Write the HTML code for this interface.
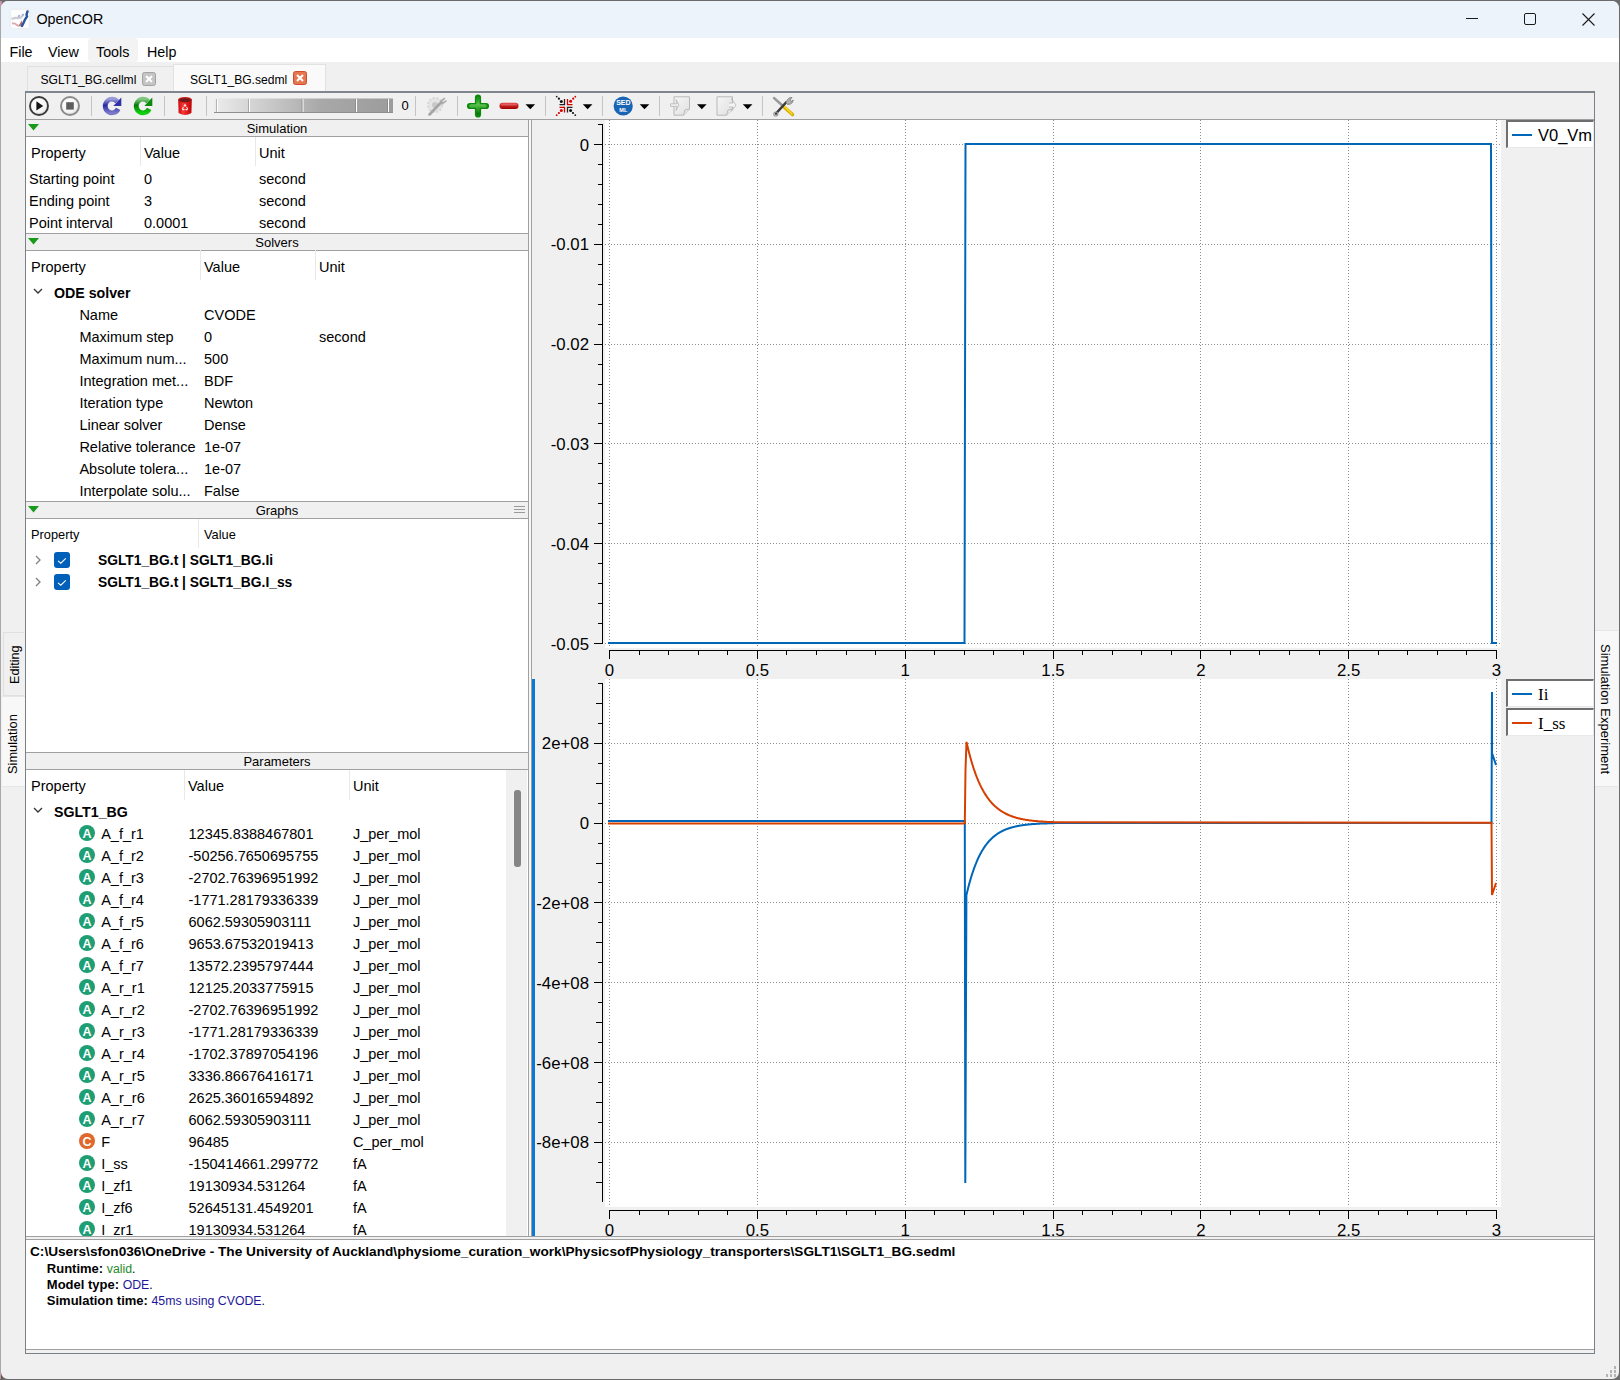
<!DOCTYPE html><html><head><meta charset="utf-8"><title>OpenCOR</title><style>
*{margin:0;padding:0;box-sizing:border-box}
html,body{width:1620px;height:1380px;overflow:hidden;background:#6b6b6b;font-family:"Liberation Sans",sans-serif;color:#000}
.abs{position:absolute}
.t{position:absolute;white-space:nowrap;line-height:1}
svg{position:absolute;overflow:visible}
</style></head><body>
<div class="abs" style="left:0;top:1px;width:2px;height:1378px;background:linear-gradient(#e878a8,#b07080 25%,#a89090 40%,#3a8a4a 45%,#a0a0a0 55%,#a07070 80%,#804040)"></div>
<div class="abs" style="left:1px;top:1px;width:1618px;height:1378px;background:#f0f0f0;border-radius:7px;"></div>
<div class="abs" style="left:1px;top:1px;width:1618px;height:37px;background:#ecf3fa;border-radius:7px 7px 0 0;"></div>
<div class="abs" style="left:1px;top:38px;width:1618px;height:24px;background:#ffffff;"></div>
<svg style="left:10px;top:9px" width="20" height="20" viewBox="0 0 20 20">
<rect x="0.3" y="0.3" width="19.4" height="19.4" rx="2.5" fill="#fdfdfd" stroke="#e4e8ec" stroke-width="0.8"/>
<path d="M1.5 10 Q5 8.5 8 9 T13 6" stroke="#c4c8d0" stroke-width="2.2" fill="none" opacity="0.9"/>
<path d="M8 7.5 L10 6.5 M12 6 L14 5.5" stroke="#9aaccc" stroke-width="1.6" fill="none"/>
<path d="M2 14.5 Q5 14 7 16 T11 15" stroke="#d8a8aa" stroke-width="1.8" fill="none"/>
<path d="M9.5 17 L11.5 13.5 L12.5 16.5" stroke="#b06a70" stroke-width="1.6" fill="none"/>
<path d="M17.5 2.5 L16.5 5.5 L17 7.5 L15 10.5 L13.5 14 L12 17" stroke="#2a55a0" stroke-width="2.4" fill="none" stroke-linecap="round"/>
</svg>
<div class="t" style="top:12.30px;font-size:14.3px;font-family:'Liberation Sans',sans-serif;color:#000;left:36.5px;">OpenCOR</div>
<div class="abs" style="left:1466px;top:18px;width:12px;height:1px;background:#1a1a1a;"></div>
<div class="abs" style="left:1524px;top:13px;width:12px;height:12px;border:1px solid #1a1a1a;border-radius:2px"></div>
<svg style="left:1582px;top:13px" width="13" height="13" viewBox="0 0 13 13"><path d="M0.5 0.5 L12.5 12.5 M12.5 0.5 L0.5 12.5" stroke="#1a1a1a" stroke-width="1.1"/></svg>
<div class="abs" style="left:88px;top:38px;width:50px;height:24px;background:#f3f3f3;border-radius:4px;"></div>
<div class="t" style="top:44.90px;font-size:14.3px;font-family:'Liberation Sans',sans-serif;color:#000;left:9.5px;">File</div>
<div class="t" style="top:44.90px;font-size:14.3px;font-family:'Liberation Sans',sans-serif;color:#000;left:48px;">View</div>
<div class="t" style="top:44.90px;font-size:14.3px;font-family:'Liberation Sans',sans-serif;color:#000;left:96px;">Tools</div>
<div class="t" style="top:44.90px;font-size:14.3px;font-family:'Liberation Sans',sans-serif;color:#000;left:147px;">Help</div>
<div class="abs" style="left:27px;top:66px;width:147px;height:26px;background:#f0f0f0;border:1px solid #e0e0e0;border-bottom:none"></div>
<div class="t" style="top:73.76px;font-size:12.1px;font-family:'Liberation Sans',sans-serif;color:#000;left:40.5px;">SGLT1_BG.cellml</div>
<svg style="left:142px;top:72px" width="14" height="14" viewBox="0 0 14 14"><rect x="0.5" y="0.5" width="13" height="13" rx="2" fill="#c4c4c4" stroke="#a2a2a2"/><path d="M4 4 L10 10 M10 4 L4 10" stroke="#fff" stroke-width="2"/></svg>
<div class="abs" style="left:173px;top:64px;width:153px;height:28px;background:#fafafa;border:1px solid #e2e2e2;border-bottom:none"></div>
<div class="t" style="top:73.76px;font-size:12.1px;font-family:'Liberation Sans',sans-serif;color:#000;left:190px;">SGLT1_BG.sedml</div>
<svg style="left:293px;top:71px" width="14" height="14" viewBox="0 0 14 14"><rect x="0.5" y="0.5" width="13" height="13" rx="2" fill="#e67650" stroke="#cf4d2c"/><path d="M4 4 L10 10 M10 4 L4 10" stroke="#fff" stroke-width="2"/></svg>
<div class="abs" style="left:25px;top:91px;width:1570px;height:2px;background:#7f868d;"></div>
<div class="abs" style="left:25px;top:91px;width:1px;height:1263px;background:#7a8088;"></div>
<div class="abs" style="left:1594px;top:91px;width:1px;height:1263px;background:#7a8088;"></div>
<div class="abs" style="left:25px;top:1353px;width:1570px;height:1px;background:#7a8088;"></div>
<div class="abs" style="left:26px;top:119px;width:1568px;height:1px;background:#a0a0a0;"></div>
<svg style="left:0;top:0" width="1620" height="1380" viewBox="0 0 1620 1380"><defs>
<radialGradient id="gw" cx="0.4" cy="0.35" r="0.7"><stop offset="0" stop-color="#ffffff"/><stop offset="0.7" stop-color="#f4f4f4"/><stop offset="1" stop-color="#cfcfcf"/></radialGradient>
<linearGradient id="gblue" x1="0" y1="0" x2="0" y2="1"><stop offset="0" stop-color="#9a9ad8"/><stop offset="0.45" stop-color="#2a2aa8"/><stop offset="1" stop-color="#7a7ac8"/></linearGradient>
<linearGradient id="ggreen" x1="0" y1="0" x2="0" y2="1"><stop offset="0" stop-color="#80c880"/><stop offset="0.45" stop-color="#067a06"/><stop offset="1" stop-color="#10d010"/></linearGradient>
<linearGradient id="gred" x1="0" y1="0" x2="1" y2="0"><stop offset="0" stop-color="#c80a0a"/><stop offset="0.35" stop-color="#f83838"/><stop offset="1" stop-color="#c00000"/></linearGradient>
<linearGradient id="gprog" x1="0" y1="0" x2="1" y2="0"><stop offset="0" stop-color="#ececec"/><stop offset="0.6" stop-color="#a8a8a8"/><stop offset="1" stop-color="#9c9c9c"/></linearGradient>
<linearGradient id="gplus" x1="0" y1="0" x2="0" y2="1"><stop offset="0" stop-color="#1a9a1a"/><stop offset="0.4" stop-color="#6acb5a"/><stop offset="1" stop-color="#0a7a0a"/></linearGradient>
<linearGradient id="gminus" x1="0" y1="0" x2="0" y2="1"><stop offset="0" stop-color="#e04040"/><stop offset="1" stop-color="#a00000"/></linearGradient>
<linearGradient id="gdoc" x1="0" y1="0" x2="1" y2="1"><stop offset="0" stop-color="#f6f6f6"/><stop offset="1" stop-color="#e0e0e0"/></linearGradient>
</defs><circle cx="39" cy="106" r="9" fill="url(#gw)" stroke="#3a3a3a" stroke-width="1.9"/><path d="M36.4 101.3 L43.3 105.9 L36.4 110.5 Z" fill="#151515"/><circle cx="70" cy="106" r="9" fill="url(#gw)" stroke="#8a8a8a" stroke-width="1.9"/><rect x="66.2" y="102.2" width="7.6" height="7.4" fill="#5e5e5e"/><line x1="91.5" y1="96" x2="91.5" y2="116" stroke="#c4c4c4" stroke-width="1"/><line x1="164.5" y1="96" x2="164.5" y2="116" stroke="#c4c4c4" stroke-width="1"/><line x1="206.5" y1="96" x2="206.5" y2="116" stroke="#c4c4c4" stroke-width="1"/><line x1="415.5" y1="96" x2="415.5" y2="116" stroke="#c4c4c4" stroke-width="1"/><line x1="457.5" y1="96" x2="457.5" y2="116" stroke="#c4c4c4" stroke-width="1"/><line x1="545.5" y1="96" x2="545.5" y2="116" stroke="#c4c4c4" stroke-width="1"/><line x1="602.5" y1="96" x2="602.5" y2="116" stroke="#c4c4c4" stroke-width="1"/><line x1="659.5" y1="96" x2="659.5" y2="116" stroke="#c4c4c4" stroke-width="1"/><line x1="762.5" y1="96" x2="762.5" y2="116" stroke="#c4c4c4" stroke-width="1"/><path d="M118.16 108.87 A6.8 6.8 0 1 1 117.21 101.63" fill="none" stroke="url(#gblue)" stroke-width="4.8"/><path d="M121.30 97.6 L121.30 106 L113.30 106 Z" fill="#3030a8"/><path d="M149.16 108.87 A6.8 6.8 0 1 1 148.21 101.63" fill="none" stroke="url(#ggreen)" stroke-width="4.8"/><path d="M152.30 97.6 L152.30 106 L144.30 106 Z" fill="#0a8a0a"/><path d="M178.2 99.5 L178.6 113 Q185 117 191.4 113 L191.8 99.5 Z" fill="url(#gred)"/><ellipse cx="185" cy="99.8" rx="6.9" ry="2.9" fill="#c41818"/><ellipse cx="185" cy="100.2" rx="5.6" ry="1.9" fill="#6e1a1a"/><path d="M185 104.6 L188 109.6 L182 109.6 Z" fill="none" stroke="#fff" stroke-width="1.1" stroke-dasharray="2.2 0.9" opacity="0.9"/><rect x="214" y="98.5" width="179" height="14.5" fill="url(#gprog)"/><line x1="214" y1="112.5" x2="393" y2="112.5" stroke="#8e8e8e" stroke-width="1"/><line x1="217.5" y1="99" x2="217.5" y2="112" stroke="#ffffff" stroke-width="1"/><line x1="216.5" y1="99" x2="216.5" y2="112" stroke="#7a7a7a" stroke-width="0.8" opacity="0.6"/><line x1="249.5" y1="99" x2="249.5" y2="112" stroke="#ffffff" stroke-width="1"/><line x1="248.5" y1="99" x2="248.5" y2="112" stroke="#7a7a7a" stroke-width="0.8" opacity="0.6"/><line x1="303" y1="99" x2="303" y2="112" stroke="#ffffff" stroke-width="1"/><line x1="302" y1="99" x2="302" y2="112" stroke="#7a7a7a" stroke-width="0.8" opacity="0.6"/><line x1="356.5" y1="99" x2="356.5" y2="112" stroke="#ffffff" stroke-width="1"/><line x1="355.5" y1="99" x2="355.5" y2="112" stroke="#7a7a7a" stroke-width="0.8" opacity="0.6"/><line x1="388.5" y1="99" x2="388.5" y2="112" stroke="#ffffff" stroke-width="1"/><line x1="387.5" y1="99" x2="387.5" y2="112" stroke="#7a7a7a" stroke-width="0.8" opacity="0.6"/><g opacity="0.75"><circle cx="435" cy="105" r="7" fill="#e2e2e2" stroke="#cfcfcf" stroke-width="2.2" stroke-dasharray="2.2 1.6"/><circle cx="435" cy="105" r="3" fill="#bdbdbd"/><path d="M429.5 114.5 L441.5 102" stroke="#8c8c8c" stroke-width="2.6" stroke-linecap="round"/><path d="M441 101 L444.5 98.5 M442.5 103.5 L446 101" stroke="#9a9a9a" stroke-width="1.6" stroke-linecap="round"/></g><path d="M478 97.5 L478 114.5 M470 106 L486 106" stroke="#0d8a0d" stroke-width="6.2" stroke-linecap="round"/><path d="M478 98.5 L478 113.5 M471 106 L485 106" stroke="url(#gplus)" stroke-width="3.6" stroke-linecap="round" opacity="0.85"/><rect x="499.5" y="102.8" width="19" height="6.2" rx="3" fill="url(#gminus)"/><rect x="501" y="103.6" width="16" height="2" rx="1" fill="#f07a7a" opacity="0.6"/><path d="M525.5 104.3 L535.1 104.3 L530.3 109.3 Z" fill="#000"/><path d="M582.8 104.3 L592.4 104.3 L587.5999999999999 109.3 Z" fill="#000"/><path d="M639.7 104.3 L649.3000000000001 104.3 L644.5 109.3 Z" fill="#000"/><path d="M697 104.3 L706.6 104.3 L701.8 109.3 Z" fill="#000"/><path d="M742.8 104.3 L752.4 104.3 L747.5999999999999 109.3 Z" fill="#000"/><g stroke-width="1.3" fill="none"><path d="M564.5 99 L564.5 104.6 L559.5 104.6" stroke="#222"/><path d="M567.5 99 L567.5 104.6 L572.5 104.6" stroke="#d40000"/><path d="M559.5 107.4 L564.5 107.4 L564.5 112.6" stroke="#d40000"/><path d="M572.5 107.4 L567.5 107.4 L567.5 112.6" stroke="#222"/></g><circle cx="556.7" cy="96.6" r="0.9" fill="#222"/><circle cx="558.9" cy="98.7" r="1.1" fill="#111"/><circle cx="561.3" cy="101.4" r="1.5" fill="#111"/><circle cx="575.3" cy="96.7" r="0.9" fill="#d40000"/><circle cx="573.2" cy="98.7" r="1.1" fill="#d40000"/><circle cx="570.6" cy="101.3" r="1.5" fill="#d40000"/><circle cx="556.7" cy="115.2" r="0.9" fill="#d40000"/><circle cx="558.9" cy="113" r="1.1" fill="#d40000"/><circle cx="561.3" cy="110.4" r="1.5" fill="#d40000"/><circle cx="575.3" cy="115.2" r="0.9" fill="#222"/><circle cx="573" cy="113" r="1.1" fill="#111"/><circle cx="570.6" cy="110.4" r="1.5" fill="#111"/><circle cx="623.2" cy="106" r="9.6" fill="#1a64b4"/><text x="623.4" y="105.3" font-family="Liberation Sans" font-weight="bold" font-size="7" fill="#fff" text-anchor="middle">SED</text><text x="623.3" y="111.6" font-family="Liberation Sans" font-weight="bold" font-size="5.6" fill="#fff" text-anchor="middle">ML</text><path d="M674.0 96.8 L689.5 96.8 L689.5 109 L683.5 115.2 L674.0 115.2 Z" fill="url(#gdoc)" stroke="#b8b8b8" stroke-width="1"/><path d="M689.5 109 L685.0 110 L683.5 115.2" fill="#e8e8e8" stroke="#b0b0b0" stroke-width="0.8"/><path d="M670.5 103.8 L677 103.8 L676 99.5 L679 105 L676 110.5 L677 106.4 L670.5 106.4 Z" fill="#f2f2f2" stroke="#b4b4b4" stroke-width="0.8"/><path d="M717.0 96.8 L732.5 96.8 L732.5 109 L726.5 115.2 L717.0 115.2 Z" fill="url(#gdoc)" stroke="#b8b8b8" stroke-width="1"/><path d="M732.5 109 L728.0 110 L726.5 115.2" fill="#e8e8e8" stroke="#b0b0b0" stroke-width="0.8"/><path d="M729 103 L733 103 L731.5 98.8 L736 105 L731.5 111.2 L733 107 L729 107" fill="#f4f4f4" stroke="#b4b4b4" stroke-width="0.8"/><path d="M774 98 L783.5 106.5" stroke="#9a9a9a" stroke-width="2.4" stroke-linecap="round"/><path d="M783.5 106.5 L792.5 114.5" stroke="#d8a800" stroke-width="3.4" stroke-linecap="round"/><path d="M784 106 L792 114" stroke="#f5dc20" stroke-width="1.6" stroke-linecap="round"/><path d="M776 113.5 L786 102.5" stroke="#3a3a3a" stroke-width="2.6" stroke-linecap="round"/><circle cx="775.8" cy="114" r="2" fill="none" stroke="#9a9a9a" stroke-width="1.2"/><path d="M786 102.5 L787.5 99.5 Q789.5 97 792 97.5 L790 100 L791 101.5 L793.2 100 Q793 103 790.5 104 L787.5 104.5 Z" fill="#b0b0b0" stroke="#7a7a7a" stroke-width="0.8"/></svg>
<div class="t" style="top:99.30px;font-size:13px;font-family:'Liberation Sans',sans-serif;color:#000;left:401.6px;">0</div>
<div class="abs" style="left:26px;top:120px;width:502px;height:1116px;background:#ffffff;"></div>
<div class="abs" style="left:528px;top:120px;width:1px;height:1116px;background:#a0a0a0;"></div>
<div class="abs" style="left:529px;top:120px;width:2px;height:1116px;background:#f8f8f8;"></div>
<div class="abs" style="left:531px;top:120px;width:1px;height:1116px;background:#a0a0a0;"></div>
<div class="abs" style="left:26px;top:120px;width:502px;height:16px;background:#f0f0f0;"></div>
<div class="abs" style="left:26px;top:136px;width:502px;height:1px;background:#a0a0a0;"></div>
<svg style="left:28px;top:124px" width="11" height="7" viewBox="0 0 11 7"><path d="M0 0 L11 0 L5.5 6.5 Z" fill="#1a9a1a"/></svg>
<div class="t" style="top:121.50px;font-size:13px;font-family:'Liberation Sans',sans-serif;color:#000;left:277px;transform:translateX(-50%);">Simulation</div>
<div class="abs" style="left:140px;top:137px;width:1px;height:29px;background:#e8e8e8;"></div>
<div class="abs" style="left:255px;top:137px;width:1px;height:29px;background:#e8e8e8;"></div>
<div class="t" style="top:145.73px;font-size:14.5px;font-family:'Liberation Sans',sans-serif;color:#000;left:31px;">Property</div>
<div class="t" style="top:145.73px;font-size:14.5px;font-family:'Liberation Sans',sans-serif;color:#000;left:144px;">Value</div>
<div class="t" style="top:145.73px;font-size:14.5px;font-family:'Liberation Sans',sans-serif;color:#000;left:259px;">Unit</div>
<div class="t" style="top:171.73px;font-size:14.5px;font-family:'Liberation Sans',sans-serif;color:#000;left:29px;">Starting point</div>
<div class="t" style="top:171.73px;font-size:14.5px;font-family:'Liberation Sans',sans-serif;color:#000;left:144px;">0</div>
<div class="t" style="top:171.73px;font-size:14.5px;font-family:'Liberation Sans',sans-serif;color:#000;left:259px;">second</div>
<div class="t" style="top:193.73px;font-size:14.5px;font-family:'Liberation Sans',sans-serif;color:#000;left:29px;">Ending point</div>
<div class="t" style="top:193.73px;font-size:14.5px;font-family:'Liberation Sans',sans-serif;color:#000;left:144px;">3</div>
<div class="t" style="top:193.73px;font-size:14.5px;font-family:'Liberation Sans',sans-serif;color:#000;left:259px;">second</div>
<div class="t" style="top:215.73px;font-size:14.5px;font-family:'Liberation Sans',sans-serif;color:#000;left:29px;">Point interval</div>
<div class="t" style="top:215.73px;font-size:14.5px;font-family:'Liberation Sans',sans-serif;color:#000;left:144px;">0.0001</div>
<div class="t" style="top:215.73px;font-size:14.5px;font-family:'Liberation Sans',sans-serif;color:#000;left:259px;">second</div>
<div class="abs" style="left:26px;top:233px;width:502px;height:1px;background:#a0a0a0;"></div>
<div class="abs" style="left:26px;top:234px;width:502px;height:16px;background:#f0f0f0;"></div>
<div class="abs" style="left:26px;top:250px;width:502px;height:1px;background:#a0a0a0;"></div>
<svg style="left:28px;top:238px" width="11" height="7" viewBox="0 0 11 7"><path d="M0 0 L11 0 L5.5 6.5 Z" fill="#1a9a1a"/></svg>
<div class="t" style="top:235.50px;font-size:13px;font-family:'Liberation Sans',sans-serif;color:#000;left:277px;transform:translateX(-50%);">Solvers</div>
<div class="abs" style="left:200px;top:250px;width:1px;height:30px;background:#e8e8e8;"></div>
<div class="abs" style="left:315px;top:250px;width:1px;height:30px;background:#e8e8e8;"></div>
<div class="t" style="top:259.73px;font-size:14.5px;font-family:'Liberation Sans',sans-serif;color:#000;left:31px;">Property</div>
<div class="t" style="top:259.73px;font-size:14.5px;font-family:'Liberation Sans',sans-serif;color:#000;left:204px;">Value</div>
<div class="t" style="top:259.73px;font-size:14.5px;font-family:'Liberation Sans',sans-serif;color:#000;left:319px;">Unit</div>
<svg style="left:33px;top:288px" width="10" height="7" viewBox="0 0 10 7"><path d="M1 1 L5 5 L9 1" stroke="#333" stroke-width="1.3" fill="none"/></svg>
<div class="t" style="top:285.98px;font-size:14.2px;font-family:'Liberation Sans',sans-serif;color:#000;font-weight:bold;left:54px;">ODE solver</div>
<div class="t" style="top:307.73px;font-size:14.5px;font-family:'Liberation Sans',sans-serif;color:#000;left:79.4px;">Name</div>
<div class="t" style="top:307.73px;font-size:14.5px;font-family:'Liberation Sans',sans-serif;color:#000;left:204px;">CVODE</div>
<div class="t" style="top:329.73px;font-size:14.5px;font-family:'Liberation Sans',sans-serif;color:#000;left:79.4px;">Maximum step</div>
<div class="t" style="top:329.73px;font-size:14.5px;font-family:'Liberation Sans',sans-serif;color:#000;left:204px;">0</div>
<div class="t" style="top:329.73px;font-size:14.5px;font-family:'Liberation Sans',sans-serif;color:#000;left:319px;">second</div>
<div class="t" style="top:351.73px;font-size:14.5px;font-family:'Liberation Sans',sans-serif;color:#000;left:79.4px;">Maximum num...</div>
<div class="t" style="top:351.73px;font-size:14.5px;font-family:'Liberation Sans',sans-serif;color:#000;left:204px;">500</div>
<div class="t" style="top:373.73px;font-size:14.5px;font-family:'Liberation Sans',sans-serif;color:#000;left:79.4px;">Integration met...</div>
<div class="t" style="top:373.73px;font-size:14.5px;font-family:'Liberation Sans',sans-serif;color:#000;left:204px;">BDF</div>
<div class="t" style="top:395.73px;font-size:14.5px;font-family:'Liberation Sans',sans-serif;color:#000;left:79.4px;">Iteration type</div>
<div class="t" style="top:395.73px;font-size:14.5px;font-family:'Liberation Sans',sans-serif;color:#000;left:204px;">Newton</div>
<div class="t" style="top:417.73px;font-size:14.5px;font-family:'Liberation Sans',sans-serif;color:#000;left:79.4px;">Linear solver</div>
<div class="t" style="top:417.73px;font-size:14.5px;font-family:'Liberation Sans',sans-serif;color:#000;left:204px;">Dense</div>
<div class="t" style="top:439.73px;font-size:14.5px;font-family:'Liberation Sans',sans-serif;color:#000;left:79.4px;">Relative tolerance</div>
<div class="t" style="top:439.73px;font-size:14.5px;font-family:'Liberation Sans',sans-serif;color:#000;left:204px;">1e-07</div>
<div class="t" style="top:461.73px;font-size:14.5px;font-family:'Liberation Sans',sans-serif;color:#000;left:79.4px;">Absolute tolera...</div>
<div class="t" style="top:461.73px;font-size:14.5px;font-family:'Liberation Sans',sans-serif;color:#000;left:204px;">1e-07</div>
<div class="t" style="top:483.73px;font-size:14.5px;font-family:'Liberation Sans',sans-serif;color:#000;left:79.4px;">Interpolate solu...</div>
<div class="t" style="top:483.73px;font-size:14.5px;font-family:'Liberation Sans',sans-serif;color:#000;left:204px;">False</div>
<div class="abs" style="left:26px;top:501px;width:502px;height:1px;background:#a0a0a0;"></div>
<div class="abs" style="left:26px;top:502px;width:502px;height:16px;background:#f0f0f0;"></div>
<div class="abs" style="left:26px;top:518px;width:502px;height:1px;background:#a0a0a0;"></div>
<svg style="left:28px;top:506px" width="11" height="7" viewBox="0 0 11 7"><path d="M0 0 L11 0 L5.5 6.5 Z" fill="#1a9a1a"/></svg>
<div class="t" style="top:503.50px;font-size:13px;font-family:'Liberation Sans',sans-serif;color:#000;left:277px;transform:translateX(-50%);">Graphs</div>
<div class="abs" style="left:514px;top:506px;width:11px;height:1px;background:#9a9a9a;"></div>
<div class="abs" style="left:514px;top:509px;width:11px;height:1px;background:#9a9a9a;"></div>
<div class="abs" style="left:514px;top:512px;width:11px;height:1px;background:#9a9a9a;"></div>
<div class="abs" style="left:198px;top:519px;width:1px;height:29px;background:#e8e8e8;"></div>
<div class="t" style="top:529.16px;font-size:12.8px;font-family:'Liberation Sans',sans-serif;color:#000;left:31px;">Property</div>
<div class="t" style="top:529.16px;font-size:12.8px;font-family:'Liberation Sans',sans-serif;color:#000;left:204px;">Value</div>
<svg style="left:35px;top:554.7px" width="7" height="10" viewBox="0 0 7 10"><path d="M1 1 L5 5 L1 9" stroke="#808080" stroke-width="1.3" fill="none"/></svg>
<svg style="left:54px;top:551.7px" width="16" height="16" viewBox="0 0 16 16"><rect x="0" y="0" width="16" height="16" rx="3" fill="#005fb8"/><path d="M4 8.8 L6.8 11.2 L11.8 6.4" stroke="#fff" stroke-width="1.1" fill="none"/></svg>
<div class="t" style="top:554.32px;font-size:13.8px;font-family:'Liberation Sans',sans-serif;color:#000;font-weight:bold;left:98px;">SGLT1_BG.t | SGLT1_BG.Ii</div>
<svg style="left:35px;top:576.7px" width="7" height="10" viewBox="0 0 7 10"><path d="M1 1 L5 5 L1 9" stroke="#808080" stroke-width="1.3" fill="none"/></svg>
<svg style="left:54px;top:573.7px" width="16" height="16" viewBox="0 0 16 16"><rect x="0" y="0" width="16" height="16" rx="3" fill="#005fb8"/><path d="M4 8.8 L6.8 11.2 L11.8 6.4" stroke="#fff" stroke-width="1.1" fill="none"/></svg>
<div class="t" style="top:576.32px;font-size:13.8px;font-family:'Liberation Sans',sans-serif;color:#000;font-weight:bold;left:98px;">SGLT1_BG.t | SGLT1_BG.I_ss</div>
<div class="abs" style="left:26px;top:752px;width:502px;height:1px;background:#a0a0a0;"></div>
<div class="abs" style="left:26px;top:753px;width:502px;height:16px;background:#f0f0f0;"></div>
<div class="abs" style="left:26px;top:769px;width:502px;height:1px;background:#a0a0a0;"></div>
<div class="t" style="top:754.50px;font-size:13px;font-family:'Liberation Sans',sans-serif;color:#000;left:277px;transform:translateX(-50%);">Parameters</div>
<div class="abs" style="left:184px;top:770px;width:1px;height:30px;background:#e8e8e8;"></div>
<div class="abs" style="left:349px;top:770px;width:1px;height:30px;background:#e8e8e8;"></div>
<div class="t" style="top:778.73px;font-size:14.5px;font-family:'Liberation Sans',sans-serif;color:#000;left:31px;">Property</div>
<div class="t" style="top:778.73px;font-size:14.5px;font-family:'Liberation Sans',sans-serif;color:#000;left:188px;">Value</div>
<div class="t" style="top:778.73px;font-size:14.5px;font-family:'Liberation Sans',sans-serif;color:#000;left:353px;">Unit</div>
<div class="abs" style="left:506px;top:770px;width:21px;height:466px;background:#f0f0f0;"></div>
<div class="abs" style="left:514px;top:790px;width:7px;height:77px;background:#858585;border-radius:3px;"></div>
<svg style="left:33px;top:807px" width="10" height="7" viewBox="0 0 10 7"><path d="M1 1 L5 5 L9 1" stroke="#333" stroke-width="1.3" fill="none"/></svg>
<div class="t" style="top:804.98px;font-size:14.2px;font-family:'Liberation Sans',sans-serif;color:#000;font-weight:bold;left:54px;">SGLT1_BG</div>
<div class="abs" style="left:26px;top:800px;width:480px;height:436px;overflow:hidden">
<svg style="left:52.7px;top:25px" width="16" height="16" viewBox="0 0 16 16"><circle cx="8" cy="8" r="8" fill="#1e9e72"/><text x="8" y="12.6" font-size="12.5" font-weight="bold" text-anchor="middle" fill="#fff" font-family="Liberation Sans">A</text></svg>
<div class="t" style="top:26.73px;font-size:14.5px;font-family:'Liberation Sans',sans-serif;color:#000;left:75.2px;">A_f_r1</div>
<div class="t" style="top:26.73px;font-size:14.5px;font-family:'Liberation Sans',sans-serif;color:#000;left:162.5px;">12345.8388467801</div>
<div class="t" style="top:26.73px;font-size:14.5px;font-family:'Liberation Sans',sans-serif;color:#000;left:326.9px;">J_per_mol</div>
<svg style="left:52.7px;top:47px" width="16" height="16" viewBox="0 0 16 16"><circle cx="8" cy="8" r="8" fill="#1e9e72"/><text x="8" y="12.6" font-size="12.5" font-weight="bold" text-anchor="middle" fill="#fff" font-family="Liberation Sans">A</text></svg>
<div class="t" style="top:48.73px;font-size:14.5px;font-family:'Liberation Sans',sans-serif;color:#000;left:75.2px;">A_f_r2</div>
<div class="t" style="top:48.73px;font-size:14.5px;font-family:'Liberation Sans',sans-serif;color:#000;left:162.5px;">-50256.7650695755</div>
<div class="t" style="top:48.73px;font-size:14.5px;font-family:'Liberation Sans',sans-serif;color:#000;left:326.9px;">J_per_mol</div>
<svg style="left:52.7px;top:69px" width="16" height="16" viewBox="0 0 16 16"><circle cx="8" cy="8" r="8" fill="#1e9e72"/><text x="8" y="12.6" font-size="12.5" font-weight="bold" text-anchor="middle" fill="#fff" font-family="Liberation Sans">A</text></svg>
<div class="t" style="top:70.73px;font-size:14.5px;font-family:'Liberation Sans',sans-serif;color:#000;left:75.2px;">A_f_r3</div>
<div class="t" style="top:70.73px;font-size:14.5px;font-family:'Liberation Sans',sans-serif;color:#000;left:162.5px;">-2702.76396951992</div>
<div class="t" style="top:70.73px;font-size:14.5px;font-family:'Liberation Sans',sans-serif;color:#000;left:326.9px;">J_per_mol</div>
<svg style="left:52.7px;top:91px" width="16" height="16" viewBox="0 0 16 16"><circle cx="8" cy="8" r="8" fill="#1e9e72"/><text x="8" y="12.6" font-size="12.5" font-weight="bold" text-anchor="middle" fill="#fff" font-family="Liberation Sans">A</text></svg>
<div class="t" style="top:92.73px;font-size:14.5px;font-family:'Liberation Sans',sans-serif;color:#000;left:75.2px;">A_f_r4</div>
<div class="t" style="top:92.73px;font-size:14.5px;font-family:'Liberation Sans',sans-serif;color:#000;left:162.5px;">-1771.28179336339</div>
<div class="t" style="top:92.73px;font-size:14.5px;font-family:'Liberation Sans',sans-serif;color:#000;left:326.9px;">J_per_mol</div>
<svg style="left:52.7px;top:113px" width="16" height="16" viewBox="0 0 16 16"><circle cx="8" cy="8" r="8" fill="#1e9e72"/><text x="8" y="12.6" font-size="12.5" font-weight="bold" text-anchor="middle" fill="#fff" font-family="Liberation Sans">A</text></svg>
<div class="t" style="top:114.73px;font-size:14.5px;font-family:'Liberation Sans',sans-serif;color:#000;left:75.2px;">A_f_r5</div>
<div class="t" style="top:114.73px;font-size:14.5px;font-family:'Liberation Sans',sans-serif;color:#000;left:162.5px;">6062.59305903111</div>
<div class="t" style="top:114.73px;font-size:14.5px;font-family:'Liberation Sans',sans-serif;color:#000;left:326.9px;">J_per_mol</div>
<svg style="left:52.7px;top:135px" width="16" height="16" viewBox="0 0 16 16"><circle cx="8" cy="8" r="8" fill="#1e9e72"/><text x="8" y="12.6" font-size="12.5" font-weight="bold" text-anchor="middle" fill="#fff" font-family="Liberation Sans">A</text></svg>
<div class="t" style="top:136.73px;font-size:14.5px;font-family:'Liberation Sans',sans-serif;color:#000;left:75.2px;">A_f_r6</div>
<div class="t" style="top:136.73px;font-size:14.5px;font-family:'Liberation Sans',sans-serif;color:#000;left:162.5px;">9653.67532019413</div>
<div class="t" style="top:136.73px;font-size:14.5px;font-family:'Liberation Sans',sans-serif;color:#000;left:326.9px;">J_per_mol</div>
<svg style="left:52.7px;top:157px" width="16" height="16" viewBox="0 0 16 16"><circle cx="8" cy="8" r="8" fill="#1e9e72"/><text x="8" y="12.6" font-size="12.5" font-weight="bold" text-anchor="middle" fill="#fff" font-family="Liberation Sans">A</text></svg>
<div class="t" style="top:158.73px;font-size:14.5px;font-family:'Liberation Sans',sans-serif;color:#000;left:75.2px;">A_f_r7</div>
<div class="t" style="top:158.73px;font-size:14.5px;font-family:'Liberation Sans',sans-serif;color:#000;left:162.5px;">13572.2395797444</div>
<div class="t" style="top:158.73px;font-size:14.5px;font-family:'Liberation Sans',sans-serif;color:#000;left:326.9px;">J_per_mol</div>
<svg style="left:52.7px;top:179px" width="16" height="16" viewBox="0 0 16 16"><circle cx="8" cy="8" r="8" fill="#1e9e72"/><text x="8" y="12.6" font-size="12.5" font-weight="bold" text-anchor="middle" fill="#fff" font-family="Liberation Sans">A</text></svg>
<div class="t" style="top:180.73px;font-size:14.5px;font-family:'Liberation Sans',sans-serif;color:#000;left:75.2px;">A_r_r1</div>
<div class="t" style="top:180.73px;font-size:14.5px;font-family:'Liberation Sans',sans-serif;color:#000;left:162.5px;">12125.2033775915</div>
<div class="t" style="top:180.73px;font-size:14.5px;font-family:'Liberation Sans',sans-serif;color:#000;left:326.9px;">J_per_mol</div>
<svg style="left:52.7px;top:201px" width="16" height="16" viewBox="0 0 16 16"><circle cx="8" cy="8" r="8" fill="#1e9e72"/><text x="8" y="12.6" font-size="12.5" font-weight="bold" text-anchor="middle" fill="#fff" font-family="Liberation Sans">A</text></svg>
<div class="t" style="top:202.73px;font-size:14.5px;font-family:'Liberation Sans',sans-serif;color:#000;left:75.2px;">A_r_r2</div>
<div class="t" style="top:202.73px;font-size:14.5px;font-family:'Liberation Sans',sans-serif;color:#000;left:162.5px;">-2702.76396951992</div>
<div class="t" style="top:202.73px;font-size:14.5px;font-family:'Liberation Sans',sans-serif;color:#000;left:326.9px;">J_per_mol</div>
<svg style="left:52.7px;top:223px" width="16" height="16" viewBox="0 0 16 16"><circle cx="8" cy="8" r="8" fill="#1e9e72"/><text x="8" y="12.6" font-size="12.5" font-weight="bold" text-anchor="middle" fill="#fff" font-family="Liberation Sans">A</text></svg>
<div class="t" style="top:224.73px;font-size:14.5px;font-family:'Liberation Sans',sans-serif;color:#000;left:75.2px;">A_r_r3</div>
<div class="t" style="top:224.73px;font-size:14.5px;font-family:'Liberation Sans',sans-serif;color:#000;left:162.5px;">-1771.28179336339</div>
<div class="t" style="top:224.73px;font-size:14.5px;font-family:'Liberation Sans',sans-serif;color:#000;left:326.9px;">J_per_mol</div>
<svg style="left:52.7px;top:245px" width="16" height="16" viewBox="0 0 16 16"><circle cx="8" cy="8" r="8" fill="#1e9e72"/><text x="8" y="12.6" font-size="12.5" font-weight="bold" text-anchor="middle" fill="#fff" font-family="Liberation Sans">A</text></svg>
<div class="t" style="top:246.73px;font-size:14.5px;font-family:'Liberation Sans',sans-serif;color:#000;left:75.2px;">A_r_r4</div>
<div class="t" style="top:246.73px;font-size:14.5px;font-family:'Liberation Sans',sans-serif;color:#000;left:162.5px;">-1702.37897054196</div>
<div class="t" style="top:246.73px;font-size:14.5px;font-family:'Liberation Sans',sans-serif;color:#000;left:326.9px;">J_per_mol</div>
<svg style="left:52.7px;top:267px" width="16" height="16" viewBox="0 0 16 16"><circle cx="8" cy="8" r="8" fill="#1e9e72"/><text x="8" y="12.6" font-size="12.5" font-weight="bold" text-anchor="middle" fill="#fff" font-family="Liberation Sans">A</text></svg>
<div class="t" style="top:268.73px;font-size:14.5px;font-family:'Liberation Sans',sans-serif;color:#000;left:75.2px;">A_r_r5</div>
<div class="t" style="top:268.73px;font-size:14.5px;font-family:'Liberation Sans',sans-serif;color:#000;left:162.5px;">3336.86676416171</div>
<div class="t" style="top:268.73px;font-size:14.5px;font-family:'Liberation Sans',sans-serif;color:#000;left:326.9px;">J_per_mol</div>
<svg style="left:52.7px;top:289px" width="16" height="16" viewBox="0 0 16 16"><circle cx="8" cy="8" r="8" fill="#1e9e72"/><text x="8" y="12.6" font-size="12.5" font-weight="bold" text-anchor="middle" fill="#fff" font-family="Liberation Sans">A</text></svg>
<div class="t" style="top:290.73px;font-size:14.5px;font-family:'Liberation Sans',sans-serif;color:#000;left:75.2px;">A_r_r6</div>
<div class="t" style="top:290.73px;font-size:14.5px;font-family:'Liberation Sans',sans-serif;color:#000;left:162.5px;">2625.36016594892</div>
<div class="t" style="top:290.73px;font-size:14.5px;font-family:'Liberation Sans',sans-serif;color:#000;left:326.9px;">J_per_mol</div>
<svg style="left:52.7px;top:311px" width="16" height="16" viewBox="0 0 16 16"><circle cx="8" cy="8" r="8" fill="#1e9e72"/><text x="8" y="12.6" font-size="12.5" font-weight="bold" text-anchor="middle" fill="#fff" font-family="Liberation Sans">A</text></svg>
<div class="t" style="top:312.73px;font-size:14.5px;font-family:'Liberation Sans',sans-serif;color:#000;left:75.2px;">A_r_r7</div>
<div class="t" style="top:312.73px;font-size:14.5px;font-family:'Liberation Sans',sans-serif;color:#000;left:162.5px;">6062.59305903111</div>
<div class="t" style="top:312.73px;font-size:14.5px;font-family:'Liberation Sans',sans-serif;color:#000;left:326.9px;">J_per_mol</div>
<svg style="left:52.7px;top:333px" width="16" height="16" viewBox="0 0 16 16"><circle cx="8" cy="8" r="8" fill="#e0662a"/><text x="8" y="12.6" font-size="12.5" font-weight="bold" text-anchor="middle" fill="#fff" font-family="Liberation Sans">C</text></svg>
<div class="t" style="top:334.73px;font-size:14.5px;font-family:'Liberation Sans',sans-serif;color:#000;left:75.2px;">F</div>
<div class="t" style="top:334.73px;font-size:14.5px;font-family:'Liberation Sans',sans-serif;color:#000;left:162.5px;">96485</div>
<div class="t" style="top:334.73px;font-size:14.5px;font-family:'Liberation Sans',sans-serif;color:#000;left:326.9px;">C_per_mol</div>
<svg style="left:52.7px;top:355px" width="16" height="16" viewBox="0 0 16 16"><circle cx="8" cy="8" r="8" fill="#1e9e72"/><text x="8" y="12.6" font-size="12.5" font-weight="bold" text-anchor="middle" fill="#fff" font-family="Liberation Sans">A</text></svg>
<div class="t" style="top:356.73px;font-size:14.5px;font-family:'Liberation Sans',sans-serif;color:#000;left:75.2px;">I_ss</div>
<div class="t" style="top:356.73px;font-size:14.5px;font-family:'Liberation Sans',sans-serif;color:#000;left:162.5px;">-150414661.299772</div>
<div class="t" style="top:356.73px;font-size:14.5px;font-family:'Liberation Sans',sans-serif;color:#000;left:326.9px;">fA</div>
<svg style="left:52.7px;top:377px" width="16" height="16" viewBox="0 0 16 16"><circle cx="8" cy="8" r="8" fill="#1e9e72"/><text x="8" y="12.6" font-size="12.5" font-weight="bold" text-anchor="middle" fill="#fff" font-family="Liberation Sans">A</text></svg>
<div class="t" style="top:378.73px;font-size:14.5px;font-family:'Liberation Sans',sans-serif;color:#000;left:75.2px;">I_zf1</div>
<div class="t" style="top:378.73px;font-size:14.5px;font-family:'Liberation Sans',sans-serif;color:#000;left:162.5px;">19130934.531264</div>
<div class="t" style="top:378.73px;font-size:14.5px;font-family:'Liberation Sans',sans-serif;color:#000;left:326.9px;">fA</div>
<svg style="left:52.7px;top:399px" width="16" height="16" viewBox="0 0 16 16"><circle cx="8" cy="8" r="8" fill="#1e9e72"/><text x="8" y="12.6" font-size="12.5" font-weight="bold" text-anchor="middle" fill="#fff" font-family="Liberation Sans">A</text></svg>
<div class="t" style="top:400.73px;font-size:14.5px;font-family:'Liberation Sans',sans-serif;color:#000;left:75.2px;">I_zf6</div>
<div class="t" style="top:400.73px;font-size:14.5px;font-family:'Liberation Sans',sans-serif;color:#000;left:162.5px;">52645131.4549201</div>
<div class="t" style="top:400.73px;font-size:14.5px;font-family:'Liberation Sans',sans-serif;color:#000;left:326.9px;">fA</div>
<svg style="left:52.7px;top:421px" width="16" height="16" viewBox="0 0 16 16"><circle cx="8" cy="8" r="8" fill="#1e9e72"/><text x="8" y="12.6" font-size="12.5" font-weight="bold" text-anchor="middle" fill="#fff" font-family="Liberation Sans">A</text></svg>
<div class="t" style="top:422.73px;font-size:14.5px;font-family:'Liberation Sans',sans-serif;color:#000;left:75.2px;">I_zr1</div>
<div class="t" style="top:422.73px;font-size:14.5px;font-family:'Liberation Sans',sans-serif;color:#000;left:162.5px;">19130934.531264</div>
<div class="t" style="top:422.73px;font-size:14.5px;font-family:'Liberation Sans',sans-serif;color:#000;left:326.9px;">fA</div>
</div>
<div class="abs" style="left:532px;top:120px;width:1062px;height:1116px;background:#f0f0f0;"></div>
<div class="abs" style="left:532px;top:679px;width:3px;height:557px;background:#0a78d4;"></div>
<div class="abs" style="left:26px;top:1236px;width:1568px;height:1px;background:#a0a0a0;"></div>
<div class="abs" style="left:26px;top:1239px;width:1568px;height:1px;background:#a0a0a0;"></div>
<div class="abs" style="left:26px;top:1240px;width:1568px;height:109px;background:#ffffff;"></div>
<div class="abs" style="left:26px;top:1349px;width:1568px;height:1px;background:#a0a0a0;"></div>
<div class="abs" style="left:605px;top:120px;width:896px;height:528px;background:#ffffff;"></div>
<div class="t" style="top:662.78px;font-size:16.8px;font-family:'Liberation Sans',sans-serif;color:#000;left:609.5px;transform:translateX(-50%);">0</div>
<div class="t" style="top:662.78px;font-size:16.8px;font-family:'Liberation Sans',sans-serif;color:#000;left:757.335px;transform:translateX(-50%);">0.5</div>
<div class="t" style="top:662.78px;font-size:16.8px;font-family:'Liberation Sans',sans-serif;color:#000;left:905.1700000000001px;transform:translateX(-50%);">1</div>
<div class="t" style="top:662.78px;font-size:16.8px;font-family:'Liberation Sans',sans-serif;color:#000;left:1053.005px;transform:translateX(-50%);">1.5</div>
<div class="t" style="top:662.78px;font-size:16.8px;font-family:'Liberation Sans',sans-serif;color:#000;left:1200.8400000000001px;transform:translateX(-50%);">2</div>
<div class="t" style="top:662.78px;font-size:16.8px;font-family:'Liberation Sans',sans-serif;color:#000;left:1348.6750000000002px;transform:translateX(-50%);">2.5</div>
<div class="t" style="top:662.78px;font-size:16.8px;font-family:'Liberation Sans',sans-serif;color:#000;left:1496.51px;transform:translateX(-50%);">3</div>
<div class="t" style="top:137.58px;font-size:16.8px;font-family:'Liberation Sans',sans-serif;color:#000;right:1031px;">0</div>
<div class="t" style="top:237.38px;font-size:16.8px;font-family:'Liberation Sans',sans-serif;color:#000;right:1031px;">-0.01</div>
<div class="t" style="top:337.18px;font-size:16.8px;font-family:'Liberation Sans',sans-serif;color:#000;right:1031px;">-0.02</div>
<div class="t" style="top:436.98px;font-size:16.8px;font-family:'Liberation Sans',sans-serif;color:#000;right:1031px;">-0.03</div>
<div class="t" style="top:536.78px;font-size:16.8px;font-family:'Liberation Sans',sans-serif;color:#000;right:1031px;">-0.04</div>
<div class="t" style="top:636.58px;font-size:16.8px;font-family:'Liberation Sans',sans-serif;color:#000;right:1031px;">-0.05</div>
<div class="abs" style="left:605px;top:679px;width:896px;height:528px;background:#ffffff;"></div>
<div class="t" style="top:1222.78px;font-size:16.8px;font-family:'Liberation Sans',sans-serif;color:#000;left:609.5px;transform:translateX(-50%);">0</div>
<div class="t" style="top:1222.78px;font-size:16.8px;font-family:'Liberation Sans',sans-serif;color:#000;left:757.335px;transform:translateX(-50%);">0.5</div>
<div class="t" style="top:1222.78px;font-size:16.8px;font-family:'Liberation Sans',sans-serif;color:#000;left:905.1700000000001px;transform:translateX(-50%);">1</div>
<div class="t" style="top:1222.78px;font-size:16.8px;font-family:'Liberation Sans',sans-serif;color:#000;left:1053.005px;transform:translateX(-50%);">1.5</div>
<div class="t" style="top:1222.78px;font-size:16.8px;font-family:'Liberation Sans',sans-serif;color:#000;left:1200.8400000000001px;transform:translateX(-50%);">2</div>
<div class="t" style="top:1222.78px;font-size:16.8px;font-family:'Liberation Sans',sans-serif;color:#000;left:1348.6750000000002px;transform:translateX(-50%);">2.5</div>
<div class="t" style="top:1222.78px;font-size:16.8px;font-family:'Liberation Sans',sans-serif;color:#000;left:1496.51px;transform:translateX(-50%);">3</div>
<div class="t" style="top:736.38px;font-size:16.8px;font-family:'Liberation Sans',sans-serif;color:#000;right:1031px;">2e+08</div>
<div class="t" style="top:816.18px;font-size:16.8px;font-family:'Liberation Sans',sans-serif;color:#000;right:1031px;">0</div>
<div class="t" style="top:895.98px;font-size:16.8px;font-family:'Liberation Sans',sans-serif;color:#000;right:1031px;">-2e+08</div>
<div class="t" style="top:975.78px;font-size:16.8px;font-family:'Liberation Sans',sans-serif;color:#000;right:1031px;">-4e+08</div>
<div class="t" style="top:1055.58px;font-size:16.8px;font-family:'Liberation Sans',sans-serif;color:#000;right:1031px;">-6e+08</div>
<div class="t" style="top:1135.38px;font-size:16.8px;font-family:'Liberation Sans',sans-serif;color:#000;right:1031px;">-8e+08</div>
<svg style="left:0;top:0" width="1620" height="1380" viewBox="0 0 1620 1380"><line x1="609.5" y1="120" x2="609.5" y2="648" stroke="#8c8c8c" stroke-width="1" stroke-dasharray="1 2"/><line x1="757.5" y1="120" x2="757.5" y2="648" stroke="#8c8c8c" stroke-width="1" stroke-dasharray="1 2"/><line x1="905.5" y1="120" x2="905.5" y2="648" stroke="#8c8c8c" stroke-width="1" stroke-dasharray="1 2"/><line x1="1053.5" y1="120" x2="1053.5" y2="648" stroke="#8c8c8c" stroke-width="1" stroke-dasharray="1 2"/><line x1="1200.5" y1="120" x2="1200.5" y2="648" stroke="#8c8c8c" stroke-width="1" stroke-dasharray="1 2"/><line x1="1348.5" y1="120" x2="1348.5" y2="648" stroke="#8c8c8c" stroke-width="1" stroke-dasharray="1 2"/><line x1="1496.5" y1="120" x2="1496.5" y2="648" stroke="#8c8c8c" stroke-width="1" stroke-dasharray="1 2"/><line x1="605" y1="144.5" x2="1501" y2="144.5" stroke="#8c8c8c" stroke-width="1" stroke-dasharray="1 2"/><line x1="605" y1="244.5" x2="1501" y2="244.5" stroke="#8c8c8c" stroke-width="1" stroke-dasharray="1 2"/><line x1="605" y1="344.5" x2="1501" y2="344.5" stroke="#8c8c8c" stroke-width="1" stroke-dasharray="1 2"/><line x1="605" y1="443.5" x2="1501" y2="443.5" stroke="#8c8c8c" stroke-width="1" stroke-dasharray="1 2"/><line x1="605" y1="543.5" x2="1501" y2="543.5" stroke="#8c8c8c" stroke-width="1" stroke-dasharray="1 2"/><line x1="605" y1="643.5" x2="1501" y2="643.5" stroke="#8c8c8c" stroke-width="1" stroke-dasharray="1 2"/><line x1="602.5" y1="124" x2="602.5" y2="644" stroke="#000" stroke-width="1"/><line x1="594" y1="144.5" x2="603" y2="144.5" stroke="#000" stroke-width="1"/><line x1="594" y1="244.5" x2="603" y2="244.5" stroke="#000" stroke-width="1"/><line x1="594" y1="344.5" x2="603" y2="344.5" stroke="#000" stroke-width="1"/><line x1="594" y1="443.5" x2="603" y2="443.5" stroke="#000" stroke-width="1"/><line x1="594" y1="543.5" x2="603" y2="543.5" stroke="#000" stroke-width="1"/><line x1="594" y1="643.5" x2="603" y2="643.5" stroke="#000" stroke-width="1"/><line x1="598" y1="124.5" x2="603" y2="124.5" stroke="#000" stroke-width="1"/><line x1="598" y1="164.5" x2="603" y2="164.5" stroke="#000" stroke-width="1"/><line x1="598" y1="184.5" x2="603" y2="184.5" stroke="#000" stroke-width="1"/><line x1="598" y1="204.5" x2="603" y2="204.5" stroke="#000" stroke-width="1"/><line x1="598" y1="224.5" x2="603" y2="224.5" stroke="#000" stroke-width="1"/><line x1="598" y1="264.5" x2="603" y2="264.5" stroke="#000" stroke-width="1"/><line x1="598" y1="284.5" x2="603" y2="284.5" stroke="#000" stroke-width="1"/><line x1="598" y1="304.5" x2="603" y2="304.5" stroke="#000" stroke-width="1"/><line x1="598" y1="324.5" x2="603" y2="324.5" stroke="#000" stroke-width="1"/><line x1="598" y1="364.5" x2="603" y2="364.5" stroke="#000" stroke-width="1"/><line x1="598" y1="384.5" x2="603" y2="384.5" stroke="#000" stroke-width="1"/><line x1="598" y1="403.5" x2="603" y2="403.5" stroke="#000" stroke-width="1"/><line x1="598" y1="423.5" x2="603" y2="423.5" stroke="#000" stroke-width="1"/><line x1="598" y1="463.5" x2="603" y2="463.5" stroke="#000" stroke-width="1"/><line x1="598" y1="483.5" x2="603" y2="483.5" stroke="#000" stroke-width="1"/><line x1="598" y1="503.5" x2="603" y2="503.5" stroke="#000" stroke-width="1"/><line x1="598" y1="523.5" x2="603" y2="523.5" stroke="#000" stroke-width="1"/><line x1="598" y1="563.5" x2="603" y2="563.5" stroke="#000" stroke-width="1"/><line x1="598" y1="583.5" x2="603" y2="583.5" stroke="#000" stroke-width="1"/><line x1="598" y1="603.5" x2="603" y2="603.5" stroke="#000" stroke-width="1"/><line x1="598" y1="623.5" x2="603" y2="623.5" stroke="#000" stroke-width="1"/><line x1="609" y1="650.5" x2="1497" y2="650.5" stroke="#000" stroke-width="1"/><line x1="609.5" y1="650" x2="609.5" y2="659" stroke="#000" stroke-width="1"/><line x1="639.5" y1="650" x2="639.5" y2="655" stroke="#000" stroke-width="1"/><line x1="668.5" y1="650" x2="668.5" y2="655" stroke="#000" stroke-width="1"/><line x1="698.5" y1="650" x2="698.5" y2="655" stroke="#000" stroke-width="1"/><line x1="727.5" y1="650" x2="727.5" y2="655" stroke="#000" stroke-width="1"/><line x1="757.5" y1="650" x2="757.5" y2="659" stroke="#000" stroke-width="1"/><line x1="786.5" y1="650" x2="786.5" y2="655" stroke="#000" stroke-width="1"/><line x1="816.5" y1="650" x2="816.5" y2="655" stroke="#000" stroke-width="1"/><line x1="846.5" y1="650" x2="846.5" y2="655" stroke="#000" stroke-width="1"/><line x1="875.5" y1="650" x2="875.5" y2="655" stroke="#000" stroke-width="1"/><line x1="905.5" y1="650" x2="905.5" y2="659" stroke="#000" stroke-width="1"/><line x1="934.5" y1="650" x2="934.5" y2="655" stroke="#000" stroke-width="1"/><line x1="964.5" y1="650" x2="964.5" y2="655" stroke="#000" stroke-width="1"/><line x1="993.5" y1="650" x2="993.5" y2="655" stroke="#000" stroke-width="1"/><line x1="1023.5" y1="650" x2="1023.5" y2="655" stroke="#000" stroke-width="1"/><line x1="1053.5" y1="650" x2="1053.5" y2="659" stroke="#000" stroke-width="1"/><line x1="1082.5" y1="650" x2="1082.5" y2="655" stroke="#000" stroke-width="1"/><line x1="1112.5" y1="650" x2="1112.5" y2="655" stroke="#000" stroke-width="1"/><line x1="1141.5" y1="650" x2="1141.5" y2="655" stroke="#000" stroke-width="1"/><line x1="1171.5" y1="650" x2="1171.5" y2="655" stroke="#000" stroke-width="1"/><line x1="1200.5" y1="650" x2="1200.5" y2="659" stroke="#000" stroke-width="1"/><line x1="1230.5" y1="650" x2="1230.5" y2="655" stroke="#000" stroke-width="1"/><line x1="1259.5" y1="650" x2="1259.5" y2="655" stroke="#000" stroke-width="1"/><line x1="1289.5" y1="650" x2="1289.5" y2="655" stroke="#000" stroke-width="1"/><line x1="1319.5" y1="650" x2="1319.5" y2="655" stroke="#000" stroke-width="1"/><line x1="1348.5" y1="650" x2="1348.5" y2="659" stroke="#000" stroke-width="1"/><line x1="1378.5" y1="650" x2="1378.5" y2="655" stroke="#000" stroke-width="1"/><line x1="1407.5" y1="650" x2="1407.5" y2="655" stroke="#000" stroke-width="1"/><line x1="1437.5" y1="650" x2="1437.5" y2="655" stroke="#000" stroke-width="1"/><line x1="1466.5" y1="650" x2="1466.5" y2="655" stroke="#000" stroke-width="1"/><line x1="1496.5" y1="650" x2="1496.5" y2="659" stroke="#000" stroke-width="1"/><line x1="609.5" y1="679" x2="609.5" y2="1207" stroke="#8c8c8c" stroke-width="1" stroke-dasharray="1 2"/><line x1="757.5" y1="679" x2="757.5" y2="1207" stroke="#8c8c8c" stroke-width="1" stroke-dasharray="1 2"/><line x1="905.5" y1="679" x2="905.5" y2="1207" stroke="#8c8c8c" stroke-width="1" stroke-dasharray="1 2"/><line x1="1053.5" y1="679" x2="1053.5" y2="1207" stroke="#8c8c8c" stroke-width="1" stroke-dasharray="1 2"/><line x1="1200.5" y1="679" x2="1200.5" y2="1207" stroke="#8c8c8c" stroke-width="1" stroke-dasharray="1 2"/><line x1="1348.5" y1="679" x2="1348.5" y2="1207" stroke="#8c8c8c" stroke-width="1" stroke-dasharray="1 2"/><line x1="1496.5" y1="679" x2="1496.5" y2="1207" stroke="#8c8c8c" stroke-width="1" stroke-dasharray="1 2"/><line x1="605" y1="743.5" x2="1501" y2="743.5" stroke="#8c8c8c" stroke-width="1" stroke-dasharray="1 2"/><line x1="605" y1="823.5" x2="1501" y2="823.5" stroke="#8c8c8c" stroke-width="1" stroke-dasharray="1 2"/><line x1="605" y1="902.5" x2="1501" y2="902.5" stroke="#8c8c8c" stroke-width="1" stroke-dasharray="1 2"/><line x1="605" y1="982.5" x2="1501" y2="982.5" stroke="#8c8c8c" stroke-width="1" stroke-dasharray="1 2"/><line x1="605" y1="1062.5" x2="1501" y2="1062.5" stroke="#8c8c8c" stroke-width="1" stroke-dasharray="1 2"/><line x1="605" y1="1142.5" x2="1501" y2="1142.5" stroke="#8c8c8c" stroke-width="1" stroke-dasharray="1 2"/><line x1="602.5" y1="683" x2="602.5" y2="1202" stroke="#000" stroke-width="1"/><line x1="594" y1="743.5" x2="603" y2="743.5" stroke="#000" stroke-width="1"/><line x1="594" y1="823.5" x2="603" y2="823.5" stroke="#000" stroke-width="1"/><line x1="594" y1="902.5" x2="603" y2="902.5" stroke="#000" stroke-width="1"/><line x1="594" y1="982.5" x2="603" y2="982.5" stroke="#000" stroke-width="1"/><line x1="594" y1="1062.5" x2="603" y2="1062.5" stroke="#000" stroke-width="1"/><line x1="594" y1="1142.5" x2="603" y2="1142.5" stroke="#000" stroke-width="1"/><line x1="598" y1="683.5" x2="603" y2="683.5" stroke="#000" stroke-width="1"/><line x1="598" y1="723.5" x2="603" y2="723.5" stroke="#000" stroke-width="1"/><line x1="598" y1="763.5" x2="603" y2="763.5" stroke="#000" stroke-width="1"/><line x1="598" y1="803.5" x2="603" y2="803.5" stroke="#000" stroke-width="1"/><line x1="598" y1="843.5" x2="603" y2="843.5" stroke="#000" stroke-width="1"/><line x1="598" y1="882.5" x2="603" y2="882.5" stroke="#000" stroke-width="1"/><line x1="598" y1="922.5" x2="603" y2="922.5" stroke="#000" stroke-width="1"/><line x1="598" y1="962.5" x2="603" y2="962.5" stroke="#000" stroke-width="1"/><line x1="598" y1="1002.5" x2="603" y2="1002.5" stroke="#000" stroke-width="1"/><line x1="598" y1="1042.5" x2="603" y2="1042.5" stroke="#000" stroke-width="1"/><line x1="598" y1="1082.5" x2="603" y2="1082.5" stroke="#000" stroke-width="1"/><line x1="598" y1="1122.5" x2="603" y2="1122.5" stroke="#000" stroke-width="1"/><line x1="598" y1="1162.5" x2="603" y2="1162.5" stroke="#000" stroke-width="1"/><line x1="596" y1="703.5" x2="603" y2="703.5" stroke="#000" stroke-width="1"/><line x1="596" y1="783.5" x2="603" y2="783.5" stroke="#000" stroke-width="1"/><line x1="596" y1="863.5" x2="603" y2="863.5" stroke="#000" stroke-width="1"/><line x1="596" y1="942.5" x2="603" y2="942.5" stroke="#000" stroke-width="1"/><line x1="596" y1="1022.5" x2="603" y2="1022.5" stroke="#000" stroke-width="1"/><line x1="596" y1="1102.5" x2="603" y2="1102.5" stroke="#000" stroke-width="1"/><line x1="596" y1="1182.5" x2="603" y2="1182.5" stroke="#000" stroke-width="1"/><line x1="609" y1="1210.5" x2="1497" y2="1210.5" stroke="#000" stroke-width="1"/><line x1="609.5" y1="1210" x2="609.5" y2="1219" stroke="#000" stroke-width="1"/><line x1="639.5" y1="1210" x2="639.5" y2="1215" stroke="#000" stroke-width="1"/><line x1="668.5" y1="1210" x2="668.5" y2="1215" stroke="#000" stroke-width="1"/><line x1="698.5" y1="1210" x2="698.5" y2="1215" stroke="#000" stroke-width="1"/><line x1="727.5" y1="1210" x2="727.5" y2="1215" stroke="#000" stroke-width="1"/><line x1="757.5" y1="1210" x2="757.5" y2="1219" stroke="#000" stroke-width="1"/><line x1="786.5" y1="1210" x2="786.5" y2="1215" stroke="#000" stroke-width="1"/><line x1="816.5" y1="1210" x2="816.5" y2="1215" stroke="#000" stroke-width="1"/><line x1="846.5" y1="1210" x2="846.5" y2="1215" stroke="#000" stroke-width="1"/><line x1="875.5" y1="1210" x2="875.5" y2="1215" stroke="#000" stroke-width="1"/><line x1="905.5" y1="1210" x2="905.5" y2="1219" stroke="#000" stroke-width="1"/><line x1="934.5" y1="1210" x2="934.5" y2="1215" stroke="#000" stroke-width="1"/><line x1="964.5" y1="1210" x2="964.5" y2="1215" stroke="#000" stroke-width="1"/><line x1="993.5" y1="1210" x2="993.5" y2="1215" stroke="#000" stroke-width="1"/><line x1="1023.5" y1="1210" x2="1023.5" y2="1215" stroke="#000" stroke-width="1"/><line x1="1053.5" y1="1210" x2="1053.5" y2="1219" stroke="#000" stroke-width="1"/><line x1="1082.5" y1="1210" x2="1082.5" y2="1215" stroke="#000" stroke-width="1"/><line x1="1112.5" y1="1210" x2="1112.5" y2="1215" stroke="#000" stroke-width="1"/><line x1="1141.5" y1="1210" x2="1141.5" y2="1215" stroke="#000" stroke-width="1"/><line x1="1171.5" y1="1210" x2="1171.5" y2="1215" stroke="#000" stroke-width="1"/><line x1="1200.5" y1="1210" x2="1200.5" y2="1219" stroke="#000" stroke-width="1"/><line x1="1230.5" y1="1210" x2="1230.5" y2="1215" stroke="#000" stroke-width="1"/><line x1="1259.5" y1="1210" x2="1259.5" y2="1215" stroke="#000" stroke-width="1"/><line x1="1289.5" y1="1210" x2="1289.5" y2="1215" stroke="#000" stroke-width="1"/><line x1="1319.5" y1="1210" x2="1319.5" y2="1215" stroke="#000" stroke-width="1"/><line x1="1348.5" y1="1210" x2="1348.5" y2="1219" stroke="#000" stroke-width="1"/><line x1="1378.5" y1="1210" x2="1378.5" y2="1215" stroke="#000" stroke-width="1"/><line x1="1407.5" y1="1210" x2="1407.5" y2="1215" stroke="#000" stroke-width="1"/><line x1="1437.5" y1="1210" x2="1437.5" y2="1215" stroke="#000" stroke-width="1"/><line x1="1466.5" y1="1210" x2="1466.5" y2="1215" stroke="#000" stroke-width="1"/><line x1="1496.5" y1="1210" x2="1496.5" y2="1219" stroke="#000" stroke-width="1"/><polyline fill="none" stroke="#0066b8" stroke-width="2" stroke-linejoin="miter" points="608.0,643.0 964.5,643.0 965.5,144.0 1491.0,144.0 1492.0,643.0 1497.0,643.0"/><polyline fill="none" stroke="#0066b8" stroke-width="2" stroke-linejoin="miter" points="608.0,821.0 964.8,821.0 965.3,1183.0 966.4,895.3 966.9,893.1 967.4,891.0 967.9,889.0 968.4,887.0 968.9,885.1 969.4,883.2 969.9,881.4 970.4,879.7 970.9,878.0 971.4,876.3 971.9,874.7 972.4,873.2 972.9,871.7 973.4,870.2 973.9,868.8 974.4,867.4 974.9,866.1 975.4,864.8 975.9,863.6 976.4,862.3 976.9,861.2 977.4,860.0 977.9,858.9 978.4,857.8 978.9,856.8 979.4,855.8 979.9,854.8 980.4,853.8 980.9,852.9 981.4,852.0 981.9,851.1 982.4,850.3 982.9,849.5 983.4,848.7 983.9,847.9 984.4,847.2 984.9,846.4 985.4,845.7 985.9,845.0 986.4,844.4 986.9,843.7 987.4,843.1 987.9,842.5 988.4,841.9 988.9,841.3 989.4,840.8 989.9,840.3 990.4,839.7 990.9,839.2 991.4,838.7 991.9,838.3 992.4,837.8 992.9,837.3 993.4,836.9 993.9,836.5 994.4,836.1 994.9,835.7 995.4,835.3 995.9,834.9 996.4,834.6 996.9,834.2 997.4,833.9 997.9,833.5 998.4,833.2 998.9,832.9 999.4,832.6 999.9,832.3 1000.4,832.0 1000.9,831.8 1001.4,831.5 1001.9,831.2 1002.4,831.0 1002.9,830.7 1003.4,830.5 1003.9,830.3 1004.4,830.0 1004.9,829.8 1005.4,829.6 1005.9,829.4 1006.4,829.2 1006.9,829.0 1007.4,828.8 1007.9,828.7 1008.4,828.5 1008.9,828.3 1009.4,828.2 1009.9,828.0 1010.4,827.8 1010.9,827.7 1011.4,827.5 1011.9,827.4 1012.4,827.3 1012.9,827.1 1013.4,827.0 1013.9,826.9 1014.4,826.8 1014.9,826.6 1015.4,826.5 1015.9,826.4 1016.4,826.3 1016.9,826.2 1017.4,826.1 1017.9,826.0 1018.4,825.9 1018.9,825.8 1019.4,825.7 1019.9,825.6 1020.4,825.5 1020.9,825.5 1021.4,825.4 1021.9,825.3 1022.4,825.2 1022.9,825.2 1023.4,825.1 1023.9,825.0 1024.4,825.0 1024.9,824.9 1025.4,824.8 1025.9,824.8 1026.4,824.7 1026.9,824.7 1027.4,824.6 1027.9,824.5 1028.4,824.5 1028.9,824.4 1029.4,824.4 1029.9,824.3 1030.4,824.3 1030.9,824.3 1031.4,824.2 1031.9,824.2 1032.4,824.1 1032.9,824.1 1033.4,824.0 1033.9,824.0 1034.4,824.0 1034.9,823.9 1035.4,823.9 1035.9,823.9 1036.4,823.8 1036.9,823.8 1037.4,823.8 1037.9,823.8 1038.4,823.7 1038.9,823.7 1039.4,823.7 1039.9,823.6 1040.4,823.6 1040.9,823.6 1041.4,823.6 1041.9,823.5 1042.4,823.5 1042.9,823.5 1043.4,823.5 1043.9,823.5 1044.4,823.4 1044.9,823.4 1045.4,823.4 1045.9,823.4 1046.4,823.4 1046.9,823.4 1047.4,823.3 1047.9,823.3 1048.4,823.3 1048.9,823.3 1049.4,823.3 1049.9,823.3 1050.4,823.2 1050.9,823.2 1051.4,823.2 1051.9,823.2 1052.4,823.2 1052.9,823.2 1053.4,823.2 1053.9,823.2 1054.4,823.2 1054.9,823.1 1055.4,823.1 1055.9,823.1 1491.5,822.8 1492.0,692.0 1492.0,753.0 1496.0,765.0"/><polyline fill="none" stroke="#d54000" stroke-width="2" stroke-linejoin="miter" points="608.0,823.5 964.8,823.5 965.5,770.0 966.5,741.9 967.0,744.1 967.5,746.3 968.0,748.4 968.5,750.4 969.0,752.4 969.5,754.3 970.0,756.2 970.5,758.0 971.0,759.8 971.5,761.5 972.0,763.2 972.5,764.8 973.0,766.4 973.5,768.0 974.0,769.5 974.5,770.9 975.0,772.3 975.5,773.7 976.0,775.1 976.5,776.4 977.0,777.7 977.5,778.9 978.0,780.1 978.5,781.3 979.0,782.4 979.5,783.5 980.0,784.6 980.5,785.6 981.0,786.7 981.5,787.6 982.0,788.6 982.5,789.5 983.0,790.5 983.5,791.3 984.0,792.2 984.5,793.0 985.0,793.9 985.5,794.6 986.0,795.4 986.5,796.2 987.0,796.9 987.5,797.6 988.0,798.3 988.5,799.0 989.0,799.6 989.5,800.3 990.0,800.9 990.5,801.5 991.0,802.1 991.5,802.6 992.0,803.2 992.5,803.7 993.0,804.2 993.5,804.7 994.0,805.2 994.5,805.7 995.0,806.2 995.5,806.6 996.0,807.1 996.5,807.5 997.0,807.9 997.5,808.3 998.0,808.7 998.5,809.1 999.0,809.5 999.5,809.9 1000.0,810.2 1000.5,810.6 1001.0,810.9 1001.5,811.2 1002.0,811.5 1002.5,811.9 1003.0,812.2 1003.5,812.4 1004.0,812.7 1004.5,813.0 1005.0,813.3 1005.5,813.5 1006.0,813.8 1006.5,814.0 1007.0,814.3 1007.5,814.5 1008.0,814.7 1008.5,815.0 1009.0,815.2 1009.5,815.4 1010.0,815.6 1010.5,815.8 1011.0,816.0 1011.5,816.2 1012.0,816.3 1012.5,816.5 1013.0,816.7 1013.5,816.9 1014.0,817.0 1014.5,817.2 1015.0,817.3 1015.5,817.5 1016.0,817.6 1016.5,817.8 1017.0,817.9 1017.5,818.0 1018.0,818.2 1018.5,818.3 1019.0,818.4 1019.5,818.5 1020.0,818.7 1020.5,818.8 1021.0,818.9 1021.5,819.0 1022.0,819.1 1022.5,819.2 1023.0,819.3 1023.5,819.4 1024.0,819.5 1024.5,819.6 1025.0,819.7 1025.5,819.7 1026.0,819.8 1026.5,819.9 1027.0,820.0 1027.5,820.1 1028.0,820.1 1028.5,820.2 1029.0,820.3 1029.5,820.4 1030.0,820.4 1030.5,820.5 1031.0,820.6 1031.5,820.6 1032.0,820.7 1032.5,820.7 1033.0,820.8 1033.5,820.8 1034.0,820.9 1034.5,820.9 1035.0,821.0 1035.5,821.0 1036.0,821.1 1036.5,821.1 1037.0,821.2 1037.5,821.2 1038.0,821.3 1038.5,821.3 1039.0,821.4 1039.5,821.4 1040.0,821.4 1040.5,821.5 1041.0,821.5 1041.5,821.5 1042.0,821.6 1042.5,821.6 1043.0,821.6 1043.5,821.7 1044.0,821.7 1044.5,821.7 1045.0,821.8 1045.5,821.8 1046.0,821.8 1046.5,821.8 1047.0,821.9 1047.5,821.9 1048.0,821.9 1048.5,821.9 1049.0,822.0 1049.5,822.0 1050.0,822.0 1050.5,822.0 1051.0,822.1 1051.5,822.1 1052.0,822.1 1052.5,822.1 1053.0,822.1 1053.5,822.2 1054.0,822.2 1054.5,822.2 1055.0,822.2 1055.5,822.2 1056.0,822.2 1491.5,822.8 1492.0,895.0 1496.0,883.0"/></svg>
<div class="abs" style="left:1506px;top:120px;width:88px;height:28px;background:#fff;border-top:2px solid #6e6e6e;border-left:2px solid #6e6e6e;border-right:1px solid #e8e8e8;border-bottom:1px solid #e8e8e8"></div>
<div class="abs" style="left:1512px;top:133.5px;width:20px;height:2.1999999999999886px;background:#0066b8;"></div>
<div class="t" style="top:127.03px;font-size:16.5px;font-family:'Liberation Sans',sans-serif;color:#000;left:1538px;">V0_Vm</div>
<div class="abs" style="left:1506px;top:679px;width:88px;height:28px;background:#fff;border-top:2px solid #6e6e6e;border-left:2px solid #6e6e6e;border-right:1px solid #e8e8e8;border-bottom:1px solid #e8e8e8"></div>
<div class="abs" style="left:1512px;top:692.5px;width:20px;height:2.2000000000000455px;background:#0066b8;"></div>
<div class="t" style="top:685.76px;font-size:17px;font-family:'Liberation Serif',serif;color:#000;left:1538px;">Ii</div>
<div class="abs" style="left:1506px;top:708px;width:88px;height:28px;background:#fff;border-top:2px solid #6e6e6e;border-left:2px solid #6e6e6e;border-right:1px solid #e8e8e8;border-bottom:1px solid #e8e8e8"></div>
<div class="abs" style="left:1512px;top:721.5px;width:20px;height:2.2000000000000455px;background:#d54000;"></div>
<div class="t" style="top:714.76px;font-size:17px;font-family:'Liberation Serif',serif;color:#000;left:1538px;">I_ss</div>
<div class="abs" style="left:1595px;top:630px;width:23px;height:157px;background:#f8f8f8;border-top:1px solid #e6e6e6;border-bottom:1px solid #e6e6e6"></div>
<div class="t" style="left:1612.4px;top:644.3px;font-size:13px;transform-origin:0 0;transform:rotate(90deg)">Simulation Experiment</div>
<div class="abs" style="left:3px;top:632px;width:21px;height:64px;background:#f0f0f0;border:1px solid #e0e0e0;border-right:none"></div>
<div class="abs" style="left:2px;top:696px;width:23px;height:91px;background:#f8f8f8;border-top:1px solid #e6e6e6;border-bottom:1px solid #e6e6e6"></div>
<div class="t" style="left:8.6px;top:684px;font-size:12.6px;transform-origin:0 0;transform:rotate(-90deg)">Editing</div>
<div class="t" style="left:7.4px;top:773.5px;font-size:12.8px;transform-origin:0 0;transform:rotate(-90deg)">Simulation</div>
<div class="abs" style="left:0px;top:1px;width:1px;height:1378px;background:#a8a8a8;"></div>
<div class="abs" style="left:1613.5px;top:1366px;width:2.5px;height:2.5px;background:#b4b4b4;"></div>
<div class="abs" style="left:1609.5px;top:1370px;width:2.5px;height:2.5px;background:#b4b4b4;"></div>
<div class="abs" style="left:1613.5px;top:1370px;width:2.5px;height:2.5px;background:#b4b4b4;"></div>
<div class="abs" style="left:1605.5px;top:1374px;width:2.5px;height:2.5px;background:#b4b4b4;"></div>
<div class="abs" style="left:1609.5px;top:1374px;width:2.5px;height:2.5px;background:#b4b4b4;"></div>
<div class="abs" style="left:1613.5px;top:1374px;width:2.5px;height:2.5px;background:#b4b4b4;"></div>
<div class="t" style="top:1245.45px;font-size:13.65px;font-family:'Liberation Sans',sans-serif;color:#000;font-weight:bold;left:30px;">C:\Users\sfon036\OneDrive - The University of Auckland\physiome_curation_work\PhysicsofPhysiology_transporters\SGLT1\SGLT1_BG.sedml</div>
<div class="t" style="top:1262.00px;font-size:13px;font-family:'Liberation Sans',sans-serif;color:#000;font-weight:bold;left:46.8px;">Runtime: <span style="font-weight:normal;font-size:12.3px;color:#1f8a1f">valid</span><span style="font-weight:normal;font-size:12.3px">.</span></div>
<div class="t" style="top:1278.00px;font-size:13px;font-family:'Liberation Sans',sans-serif;color:#000;font-weight:bold;left:46.8px;">Model type: <span style="font-weight:normal;font-size:12.3px;color:#24169a">ODE</span><span style="font-weight:normal;font-size:12.3px">.</span></div>
<div class="t" style="top:1294.00px;font-size:13px;font-family:'Liberation Sans',sans-serif;color:#000;font-weight:bold;left:46.8px;">Simulation time: <span style="font-weight:normal;font-size:12.3px;color:#24169a">45ms using CVODE</span><span style="font-weight:normal;font-size:12.3px">.</span></div>
</body></html>
